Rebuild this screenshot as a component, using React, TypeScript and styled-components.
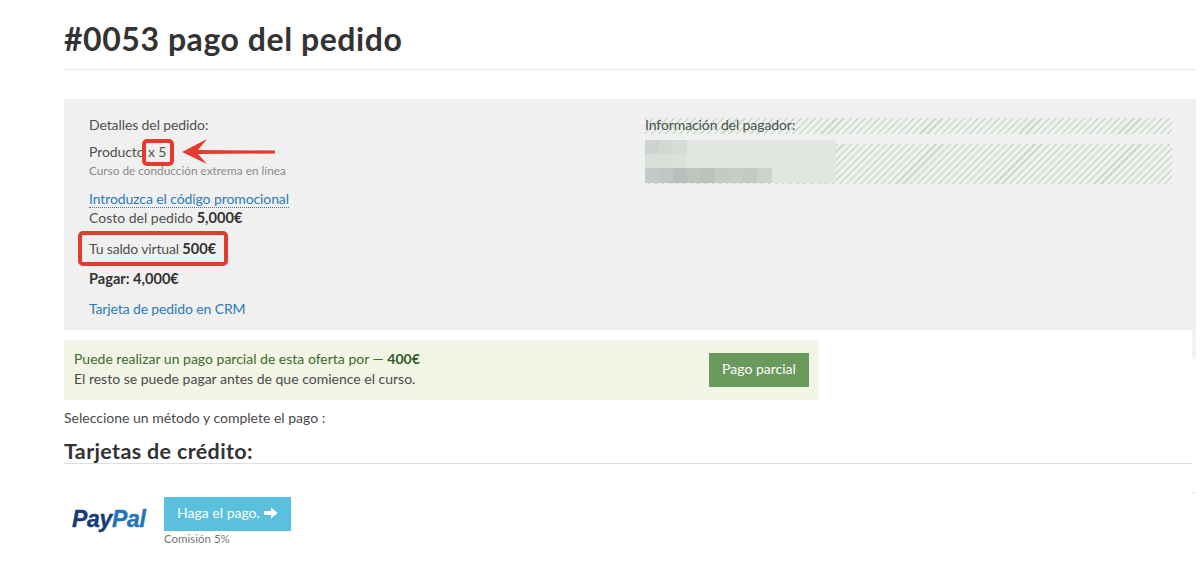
import React from "react";
import styled, { createGlobalStyle } from "styled-components";

const Global = createGlobalStyle`
  html, body { margin: 0; padding: 0; background: #fff; }
  body { font-family: "Lato", "Liberation Sans", sans-serif; color: #444; overflow: hidden; }
`;

const Page = styled.div`
  position: relative;
  width: 1200px;
  height: 565px;
  box-sizing: border-box;
  padding-left: 64px;
  overflow: hidden;
`;

const Header = styled.header`
  width: 1132px;
  height: 70px;
  box-sizing: border-box;
  border-bottom: 1px solid #e9e9e9;
  margin-bottom: 29px;
  padding-top: 19px;
`;

const Title = styled.h1`
  margin: 0;
  font-size: 32px;
  line-height: 40px;
  font-weight: 700;
  letter-spacing: 0.55px;
  color: #333;
`;

const Panel = styled.section`
  display: grid;
  grid-template-columns: 556px 527px;
  width: 1132px;
  height: 231px;
  box-sizing: border-box;
  padding: 17px 0 0 25px;
  background: #f0f0f0;
  font-size: 14px;
`;

const Column = styled.div`
  display: flex;
  flex-direction: column;
`;

const Line = styled.div<{ $mt?: number; $ls?: number }>`
  height: 18px;
  line-height: 18px;
  margin-top: ${(p) => p.$mt ?? 0}px;
  letter-spacing: ${(p) => p.$ls ?? -0.1}px;
  white-space: nowrap;
  color: #505050;
`;

const Small = styled.div`
  height: 20px;
  line-height: 20px;
  font-size: 11.8px;
  color: #8a8a8a;
  white-space: nowrap;
`;

const PromoLink = styled.a`
  color: #2b7bb9;
  border-bottom: 1px dotted #2b7bb9;
  line-height: 17px;
  display: inline-block;
`;

const PlainLink = styled.a`
  color: #2b7bb9;
`;

const Strong = styled.b`
  font-weight: 700;
  font-size: 14.6px;
  letter-spacing: 0;
  line-height: 1;
  color: #333;
`;

const Hatch = styled.div`
  background: repeating-linear-gradient(
    135deg,
    #c6dcc8 0,
    #c6dcc8 1.5px,
    transparent 1.5px,
    transparent 5px
  );
`;

const PayerTitle = styled(Hatch)`
  height: 16px;
  margin-top: 2px;
  line-height: 14px;
  letter-spacing: -0.1px;
  color: #505050;
  white-space: nowrap;
`;

const PayerBody = styled(Hatch)`
  height: 40px;
  margin-top: 10px;
`;

const Mosaic = styled.svg`
  display: block;
  transform: translateY(-4px);
`;

const Alert = styled.div`
  display: flex;
  align-items: center;
  justify-content: space-between;
  width: 755px;
  height: 60px;
  box-sizing: border-box;
  margin-top: 10px;
  padding: 0 10px;
  background: #f2f5e6;
  font-size: 14px;
  line-height: 20px;
  color: #4a4a4a;
`;

const AlertText = styled.div`
  margin-top: -2px;
`;

const AlertAmount = styled.b`
  font-weight: 700;
  color: #2d5c1e;
`;

const AlertFirst = styled.span`
  color: #3d6b2e;
`;

const GreenButton = styled.button`
  width: 100px;
  height: 34px;
  border: 0;
  padding: 0 0 3px;
  background: #6a9a5b;
  color: #fff;
  font: inherit;
`;

const Prompt = styled.p`
  margin: 9px 0 0;
  font-size: 14px;
  line-height: 18px;
  color: #4a4a4a;
`;

const SectionTitle = styled.h2`
  width: 1128px;
  height: 31px;
  box-sizing: border-box;
  margin: 6px 0 0;
  padding-top: 6px;
  border-bottom: 1px solid #dedede;
  font-size: 21.5px;
  line-height: 24px;
  font-weight: 700;
  letter-spacing: 0.35px;
  color: #333;
`;

const MethodRow = styled.div`
  display: flex;
  margin-top: 33px;
`;

const LogoBox = styled.div`
  width: 100px;
  height: 34px;
  display: flex;
  align-items: center;
  padding: 10px 0 0 8px;
  box-sizing: border-box;
`;

const PayLogo = styled.span`
  font-family: "Liberation Sans", sans-serif;
  font-size: 23px;
  font-weight: 700;
  font-style: italic;
  letter-spacing: -0.3px;
  -webkit-text-stroke: 0.4px currentColor;
  color: #173a78;
`;

const PalLogo = styled.span`
  color: #2474b8;
`;

const MethodCol = styled.div`
  display: flex;
  flex-direction: column;
`;

const PayButton = styled.button`
  display: flex;
  align-items: center;
  justify-content: center;
  gap: 4px;
  width: 127px;
  height: 34px;
  border: 0;
  padding: 0 0 3px;
  background: #5bc0de;
  color: #fff;
  font: 14px "Lato", sans-serif;
`;

const Fee = styled.div`
  font-size: 11.5px;
  line-height: 16px;
  color: #777;
`;

const RedBox = styled.div<{ $x: number; $y: number; $w: number; $h: number }>`
  position: absolute;
  left: ${(p) => p.$x}px;
  top: ${(p) => p.$y}px;
  width: ${(p) => p.$w}px;
  height: ${(p) => p.$h}px;
  box-sizing: border-box;
  border: 4px solid #e53a30;
  border-radius: 5px;
`;

const ArrowSvg = styled.svg`
  position: absolute;
  left: 180px;
  top: 139px;
`;

const Stub = styled.div<{ $y: number; $h: number }>`
  position: absolute;
  left: 1192px;
  top: ${(p) => p.$y}px;
  width: 4px;
  height: ${(p) => p.$h}px;
  background: #f3f3f3;
`;

const mosaic: [number, number, string][][] = [
  [[0, 14, "#cdd3ce"], [14, 14, "#d2d9d3"], [28, 14, "#d6ddd6"], [42, 149, "#e1e7e0"]],
  [[0, 14, "#d9e0d9"], [14, 14, "#d7dfd8"], [28, 14, "#dbe2db"], [42, 149, "#e1e7e0"]],
  [[0, 14, "#c4cac5"], [14, 14, "#bfc6c3"], [28, 14, "#b9c0bb"], [42, 14, "#bfc5be"], [56, 14, "#bdc3bc"], [70, 14, "#c4cbc5"], [84, 14, "#c6cec6"], [98, 14, "#c2cac3"], [112, 15, "#cbd3cb"], [127, 64, "#e1e7e0"]],
];

export default function App() {
  return (
    <Page>
      <Global />
      <Header>
        <Title>#0053 pago del pedido</Title>
      </Header>
      <Panel>
        <Column>
          <Line>Detalles del pedido:</Line>
          <Line $mt={9}>Producto x 5</Line>
          <Small>Curso de conducción extrema en línea</Small>
          <Line $mt={9}><PromoLink>Introduzca el código promocional</PromoLink></Line>
          <Line $mt={1} $ls={0}>Costo del pedido <Strong>5,000€</Strong></Line>
          <Line $mt={13} $ls={-0.15}>Tu saldo virtual <Strong>500€</Strong></Line>
          <Line $mt={12}><Strong>Pagar: 4,000€</Strong></Line>
          <Line $mt={12} $ls={-0.13}><PlainLink>Tarjeta de pedido en CRM</PlainLink></Line>
        </Column>
        <Column>
          <PayerTitle>Información del pagador:</PayerTitle>
          <PayerBody>
            <Mosaic width="191" height="43" viewBox="0 0 191 43">
              {mosaic.map((row, r) =>
                row.map(([x, w, c]) => (
                  <rect key={`${r}-${x}`} x={x} y={r * 14} width={w} height={r === 2 ? 15 : 14} fill={c} />
                ))
              )}
            </Mosaic>
          </PayerBody>
        </Column>
      </Panel>
      <Alert>
        <AlertText>
          <AlertFirst>Puede realizar un pago parcial de esta oferta por — <AlertAmount>400€</AlertAmount></AlertFirst>
          <br />
          El resto se puede pagar antes de que comience el curso.
        </AlertText>
        <GreenButton>Pago parcial</GreenButton>
      </Alert>
      <Prompt>Seleccione un método y complete el pago :</Prompt>
      <SectionTitle>Tarjetas de crédito:</SectionTitle>
      <MethodRow>
        <LogoBox>
          <PayLogo>Pay<PalLogo>Pal</PalLogo></PayLogo>
        </LogoBox>
        <MethodCol>
          <PayButton>
            Haga el pago.
            <svg width="14" height="12" viewBox="0 0 14 12">
              <path d="M0 4h7V0.5L13.5 6 7 11.5V8H0z" fill="#fff" />
            </svg>
          </PayButton>
          <Fee>Comisión 5%</Fee>
        </MethodCol>
      </MethodRow>
      <RedBox $x={142} $y={139} $w={32} $h={27} />
      <RedBox $x={78} $y={231} $w={150} $h={35} />
      <ArrowSvg width="100" height="26" viewBox="0 0 100 26">
        <path d="M2 13 L27 0 L18 11 L95 11.5 L95 14.5 L18 15 L27 25 Z" fill="#e53a30" />
      </ArrowSvg>
      <Stub $y={330} $h={29} />
      <Stub $y={492} $h={2} />
    </Page>
  );
}
